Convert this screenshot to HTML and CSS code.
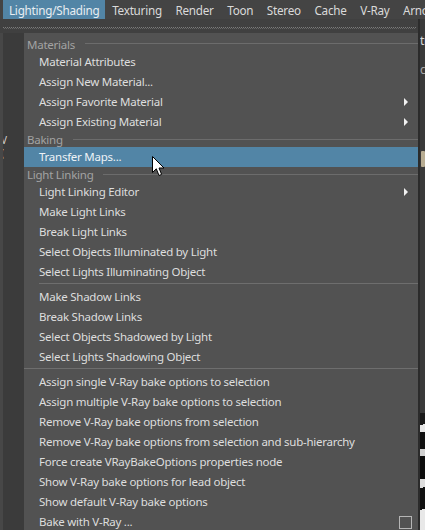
FILE: index.html
```html
<!DOCTYPE html>
<html>
<head>
<meta charset="utf-8">
<link rel="stylesheet" href="styles.css">
</head>
<body>
<div class="screen">
  <div class="menubar">
    <span class="mb-item active">Lighting/Shading</span>
    <span class="mb-item">Texturing</span>
    <span class="mb-item">Render</span>
    <span class="mb-item">Toon</span>
    <span class="mb-item">Stereo</span>
    <span class="mb-item">Cache</span>
    <span class="mb-item">V-Ray</span>
    <span class="mb-item">Arnold</span>
  </div>
  <div class="tear-row">
    <div class="tearoff"></div>
    <div class="tear-edge"></div>
  </div>
  <div class="body">
    <div class="left-strip">
      <div class="ls-blue"></div>
      <span class="ls-ch ls-v">V</span>
      <span class="ls-ch ls-p">(</span>
    </div>
    <div class="menu">
      <div class="header"><span>Materials</span><i></i></div>
      <div class="item">Material Attributes</div>
      <div class="item">Assign New Material...</div>
      <div class="item sub">Assign Favorite Material</div>
      <div class="item sub">Assign Existing Material</div>
      <div class="header short"><span>Baking</span><i></i></div>
      <div class="item hover">Transfer Maps...
        <svg class="cursor" width="14" height="21" viewBox="0 0 14 21"><path d="M0.5 0.5 L0.5 16.5 L4.3 12.8 L7 19.5 L9.6 18.4 L7 12 L12 12 Z" fill="#fff" stroke="#000" stroke-width="1" stroke-linejoin="round"/></svg>
      </div>
      <div class="header short"><span>Light Linking</span><i></i></div>
      <div class="item sub">Light Linking Editor</div>
      <div class="item">Make Light Links</div>
      <div class="item">Break Light Links</div>
      <div class="item">Select Objects Illuminated by Light</div>
      <div class="item">Select Lights Illuminating Object</div>
      <div class="sep indent"></div>
      <div class="item">Make Shadow Links</div>
      <div class="item">Break Shadow Links</div>
      <div class="item">Select Objects Shadowed by Light</div>
      <div class="item">Select Lights Shadowing Object</div>
      <div class="sep"></div>
      <div class="item">Assign single V-Ray bake options to selection</div>
      <div class="item">Assign multiple V-Ray bake options to selection</div>
      <div class="item">Remove V-Ray bake options from selection</div>
      <div class="item">Remove V-Ray bake options from selection and sub-hierarchy</div>
      <div class="item">Force create VRayBakeOptions properties node</div>
      <div class="item">Show V-Ray bake options for lead object</div>
      <div class="item">Show default V-Ray bake options</div>
      <div class="item box">Bake with V-Ray ...</div>
    </div>
    <div class="right-strip">
      <span class="rs-text">tr</span>
      <span class="rs-text rs-text2">c</span>
      <div class="rs-icon"></div>
      <div class="rs-zebra"></div>
    </div>
  </div>
</div>
</body>
</html>
```

FILE: styles.css
```css
* { box-sizing: border-box; margin: 0; padding: 0; }
html, body { width: 425px; height: 530px; overflow: hidden; background: #444; }
body { font-family: "Noto Sans", "Open Sans", sans-serif; font-size: 11.5px; letter-spacing: -0.25px; color: #dcdcdc; }

.screen { width: 425px; height: 530px; display: flex; flex-direction: column; overflow: hidden; }

.menubar { height: 19px; background: #444444; display: flex; align-items: stretch; padding-left: 3px; flex-shrink: 0; white-space: nowrap; }
.mb-item { padding: 0 6.8px; line-height: 20px; color: #dadada; font-size: 11.7px; }
.mb-item.active { background: #5285a6; padding: 0 6px; color: #e8eef2; }

.tear-row { height: 14px; background: #404040; display: flex; flex-shrink: 0; position: relative; }
.tearoff { width: 418px; padding-top: 8px; }
.tearoff::before { content: ""; display: block; margin-left: 3px; margin-right: 2px; height: 2px;
  background-image:
    repeating-linear-gradient(90deg, #7a7a7a 0 1px, transparent 1px 2px),
    repeating-linear-gradient(90deg, transparent 0 1px, #666 1px 2px);
  background-size: 100% 1px, 100% 1px; background-position: 0 0, 0 1px; background-repeat: no-repeat; }
.tear-edge { flex: 1; background: #3a3a3a; border-left: 2px solid #2c2c2c; }

.body { flex: 1; display: flex; min-height: 0; }

.left-strip { width: 24px; background: #3b3b3b; position: relative; border-left: 3px solid #474747; overflow: hidden; }
.ls-blue { position: absolute; left: -3px; top: 2px; width: 3px; height: 16px; background: #5a8db0; }
.ls-ch { position: absolute; left: -2px; color: #cfcfcf; font-size: 10px; }
.ls-v { top: 100px; }
.ls-p { top: 113px; }

.menu { width: 394px; background: #525252; padding-top: 3px; overflow: hidden; }

.header { height: 16px; display: flex; align-items: center; padding-left: 3px; color: #a3a3a3; }
.header.short { height: 15px; }
.header span { line-height: 15px; }
.header i { flex: 1; height: 1px; background: #6c6c6c; margin-left: 10px; margin-top: -1px; }

.item { height: 20px; line-height: 20px; padding-left: 15px; white-space: nowrap; position: relative; color: #dedede; }
.item.hover { background: #5285a6; color: #eef3f6; }
.item.sub::after { content: ""; position: absolute; right: 10px; top: 6px; border-left: 4px solid #f2f2f2; border-top: 4px solid transparent; border-bottom: 4px solid transparent; }
.item.box::after { content: ""; position: absolute; right: 6px; top: 4px; width: 11px; height: 11px; border: 1px solid #b5b5b5; }

.cursor { position: absolute; left: 128px; top: 9px; }

.sep { height: 5px; padding-top: 1px; }
.sep::before { content: ""; display: block; height: 1px; background: #6e6e6e; }
.sep.indent { padding-left: 15px; }

.right-strip { flex: 1; background: #3a3a3a; border-left: 2px solid #2b2b2b; position: relative; overflow: hidden; }
.rs-text { position: absolute; left: 0; top: 1px; color: #d8d8d8; font-size: 12px; line-height: 14px; }
.rs-text2 { top: 30px; color: #a8a8a8; }
.rs-icon { position: absolute; left: 1px; top: 118px; width: 4px; height: 16px; background: #b8ad93; border-radius: 1px; }
.rs-zebra { position: absolute; left: 0; top: 380px; width: 6px; height: 120px;
  background: linear-gradient(170deg, #1a1a1a 0 10%, #e6e6e6 10% 16%, #111 16% 30%, #d0d0d0 30% 36%, #0d0d0d 36% 55%, #ddd 55% 62%, #111 62% 80%, #e8e8e8 80% 100%); }
```
